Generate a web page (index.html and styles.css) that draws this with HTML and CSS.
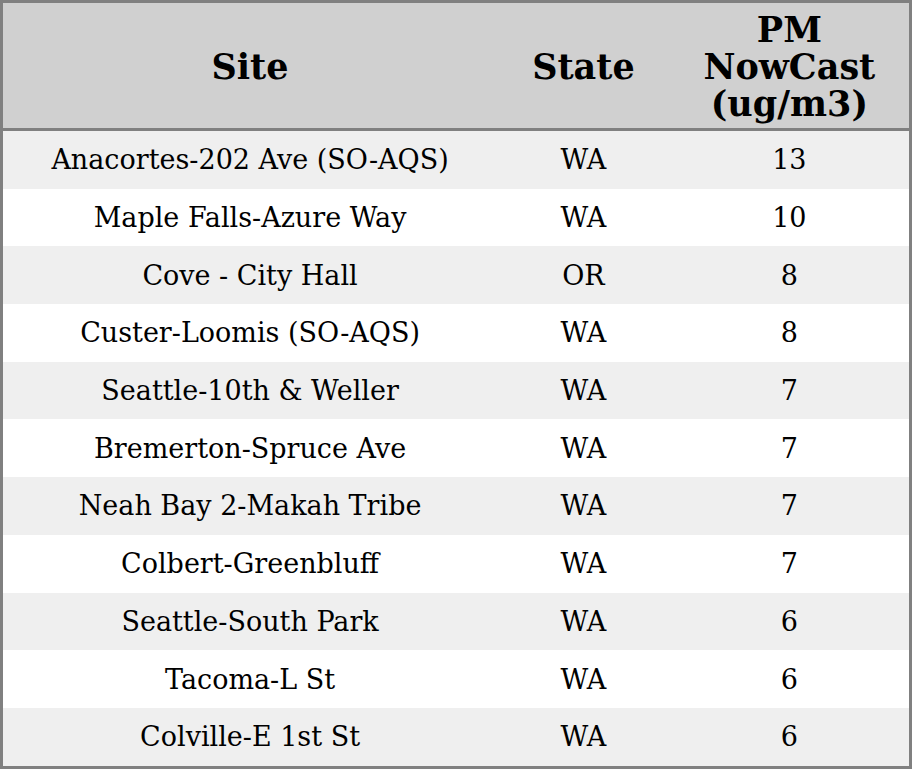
FILE: index.html
```html
<!DOCTYPE html>
<html>
<head>
<meta charset="utf-8">
<link rel="stylesheet" href="styles.css">
</head>
<body>
<table class="aq">
  <colgroup>
    <col class="c-site">
    <col class="c-state">
    <col class="c-pm">
  </colgroup>
  <thead>
    <tr><th>Site</th><th>State</th><th>PM<br>NowCast<br>(ug/m3)</th></tr>
  </thead>
  <tbody>
    <tr><td>Anacortes-202 Ave (SO-AQS)</td><td>WA</td><td>13</td></tr>
    <tr><td>Maple Falls-Azure Way</td><td>WA</td><td>10</td></tr>
    <tr><td>Cove - City Hall</td><td>OR</td><td>8</td></tr>
    <tr><td>Custer-Loomis (SO-AQS)</td><td>WA</td><td>8</td></tr>
    <tr><td>Seattle-10th &amp; Weller</td><td>WA</td><td>7</td></tr>
    <tr><td>Bremerton-Spruce Ave</td><td>WA</td><td>7</td></tr>
    <tr><td>Neah Bay 2-Makah Tribe</td><td>WA</td><td>7</td></tr>
    <tr><td>Colbert-Greenbluff</td><td>WA</td><td>7</td></tr>
    <tr><td>Seattle-South Park</td><td>WA</td><td>6</td></tr>
    <tr><td>Tacoma-L St</td><td>WA</td><td>6</td></tr>
    <tr><td>Colville-E 1st St</td><td>WA</td><td>6</td></tr>
  </tbody>
</table>
</body>
</html>
```
FILE: styles.css
```css
html, body {
  margin: 0;
  padding: 0;
  background: #ffffff;
}
.aq {
  width: 912px;
  border-collapse: collapse;
  border: 3px solid #808080;
  font-family: "DejaVu Serif", serif;
  color: #000;
  table-layout: fixed;
}
.c-site { width: 494px; }
.c-state { width: 172px; }
.c-pm { width: 240px; }
.aq th {
  background: #d0d0d0;
  font-size: 35px;
  font-weight: bold;
  line-height: 37px;
  height: 123px;
  padding: 2px 0 0 0;
  text-align: center;
  vertical-align: middle;
  border-bottom: 3px solid #808080;
}
.aq td {
  font-size: 27px;
  line-height: 30px;
  height: 56.7px;
  padding: 1px 0 0 0;
  text-align: center;
  vertical-align: middle;
}
.aq tbody tr:nth-child(odd) td {
  background: #efefef;
}
.aq tbody tr:nth-child(even) td {
  background: #ffffff;
}
```
